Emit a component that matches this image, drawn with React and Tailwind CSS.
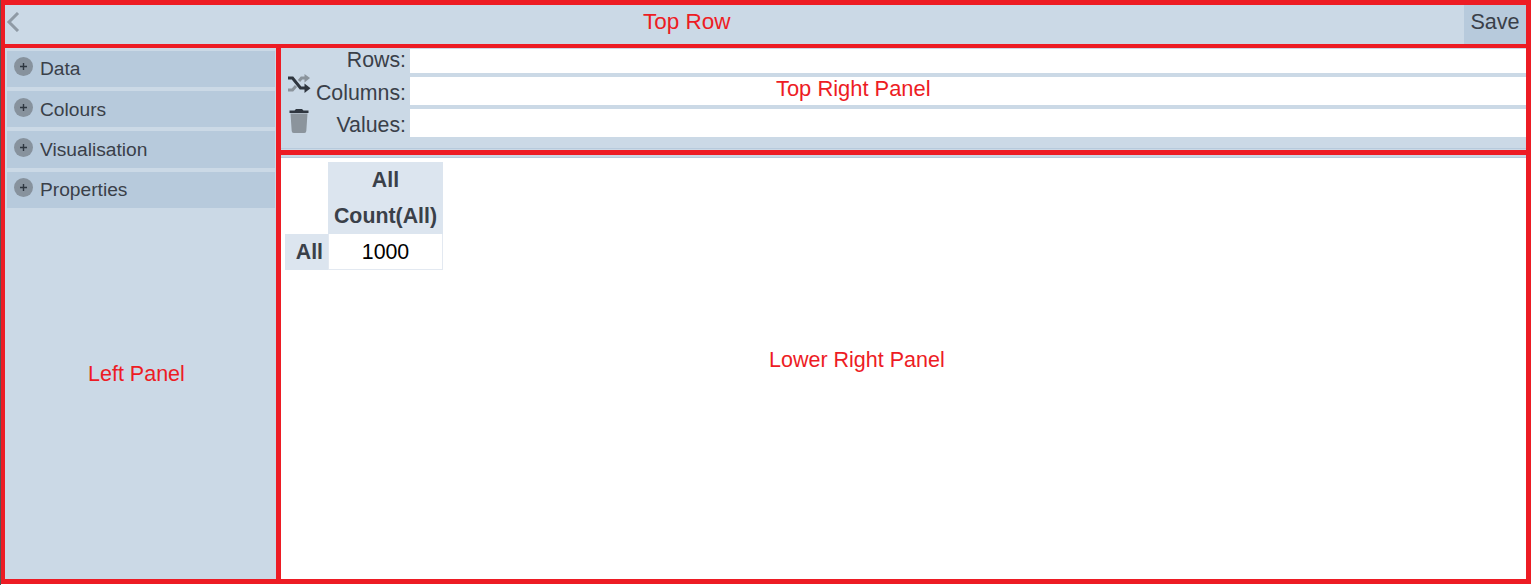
const panelBg = "bg-[#cbd9e6]";

function Shuffle() {
  return (
    <svg width="24" height="20" viewBox="0 0 24 20" fill="none">
      <path d="M1 16h4.500L9 12" stroke="#8b949c" strokeWidth="3" />
      <path d="M12 7l2.500-3H19" stroke="#8b949c" strokeWidth="3" />
      <path d="M17.500 0l5.500 4-5.500 4.500z" fill="#8b949c" />
      <path d="M1 4h4.500l8 10H18" stroke="#2f363f" strokeWidth="3" />
      <path d="M17.500 9.500l6 4.800-6 4.700z" fill="#2f363f" />
    </svg>
  );
}

function Trash() {
  return (
    <svg width="20" height="24" viewBox="0 0 20 24">
      <path d="M7 0h6l1.500 1.500h5v2.500H0.500V1.500h5z" fill="#2f363f" />
      <path d="M1.500 4.500h17l-1.200 17.500a2 2 0 0 1-2 2H4.700a2 2 0 0 1-2-2z" fill="#8b949c" />
    </svg>
  );
}

function PlusDot() {
  return (
    <span className="flex h-[19px] w-[19px] items-center justify-center rounded-full bg-[#87929d] text-[#2e3640]">
      <svg width="9" height="9" viewBox="0 0 9 9">
        <path d="M4.500 1v7M1 4.500h7" stroke="currentColor" strokeWidth="1.400" />
      </svg>
    </span>
  );
}

function Section({ label, className }) {
  return (
    <div className={`flex bg-[#b7cadc] pl-[7px] ${className}`}>
      <div className="mt-[6px]"><PlusDot /></div>
      <span className="ml-[7px] mt-[7px] text-[19.2px] leading-[22px]">{label}</span>
    </div>
  );
}

function Field({ label, className, labelClass }) {
  return (
    <div className={`flex ${className}`}>
      <span className={`w-[129px] pr-[4px] text-right text-[21.33px] leading-[24px] ${labelClass}`}>{label}</span>
      <div className="flex-1 bg-white" />
    </div>
  );
}

function Note({ className, children }) {
  return <span className={`absolute leading-[24px] text-[#ed1c24] ${className}`}>{children}</span>;
}

export default function App() {
  return (
    <div
      className="relative h-[585px] w-[1533px] overflow-hidden border-l border-[#555] bg-white pr-[2px] text-[#3a4049]"
      style={{ fontFamily: '"Liberation Sans", Arial, sans-serif' }}
    >
      {/* top row */}
      <div className={`flex h-[48px] items-stretch justify-between border-[5px] border-b-4 border-l-4 border-[#ed1c24] ${panelBg}`}>
        <svg className="ml-[1px] mt-[7px]" width="14" height="20" viewBox="0 0 14 20" fill="none">
          <path d="M12 1L3 10l9 9" stroke="#8f9aa5" strokeWidth="3" />
        </svg>
        <div className="flex w-[62px] items-start justify-center bg-[#b7cadc] pt-[4px] text-[21.6px] leading-[25px]">Save</div>
      </div>

      <div className="flex h-[536px]">
        {/* left panel */}
        <div className={`flex w-[280px] flex-col border-[4px] border-r-[5px] border-t-0 border-b-[5px] border-[#ed1c24] pl-[2px] pr-[1px] pt-[3px] ${panelBg}`}>
          <Section label="Data" className="h-[36px]" />
          <Section label="Colours" className="mt-[4px] h-[36px] pt-[1px]" />
          <Section label="Visualisation" className="mt-[4px] h-[37px] pt-[1px]" />
          <Section label="Properties" className="mt-[4px] h-[36px]" />
        </div>

        {/* right side */}
        <div className="flex min-w-0 flex-1 flex-col border-b-[5px] border-r-[5px] border-[#ed1c24]">
          <div className={`relative h-[107px] shrink-0 border-b-[5px] border-[#ed1c24] pt-[1px] ${panelBg}`}>
            <Field label="Rows:" className="h-[24px]" labelClass="-mt-[1px]" />
            <Field label="Columns:" className="mt-[4px] h-[28px]" labelClass="self-end" />
            <Field label="Values:" className="mt-[4px] h-[28px]" labelClass="self-end" />
            <div className="mt-[11px] h-px bg-[#b7cadc]" />
            <div className="absolute left-[6px] top-[26px]"><Shuffle /></div>
            <div className="absolute left-[8px] top-[61px]"><Trash /></div>
          </div>
          <div className={`h-[3px] shrink-0 border-b border-[#b7cadc] ${panelBg}`} />

          {/* pivot table */}
          <div className="flex-1 bg-white pl-[4px] pt-[4px]">
            <div className="grid grid-cols-[43px_115px] grid-rows-[36px_36px_36px] text-center text-[21.33px] leading-[37px]">
              <div />
              <div className="bg-[#dce5ef] font-bold">All</div>
              <div />
              <div className="bg-[#dce5ef] font-bold">Count(All)</div>
              <div className="bg-[#dce5ef] pr-[5px] text-right font-bold">All</div>
              <div className="border-x border-b border-[#e3e9f1] text-black">1000</div>
            </div>
          </div>
        </div>
      </div>

      <Note className="left-[642px] top-[10px] text-[22.5px]">Top Row</Note>
      <Note className="left-[87px] top-[362px] text-[21.5px]">Left Panel</Note>
      <Note className="left-[775px] top-[77px] text-[21.9px]">Top Right Panel</Note>
      <Note className="left-[768px] top-[348px] text-[21.5px]">Lower Right Panel</Note>
    </div>
  );
}
